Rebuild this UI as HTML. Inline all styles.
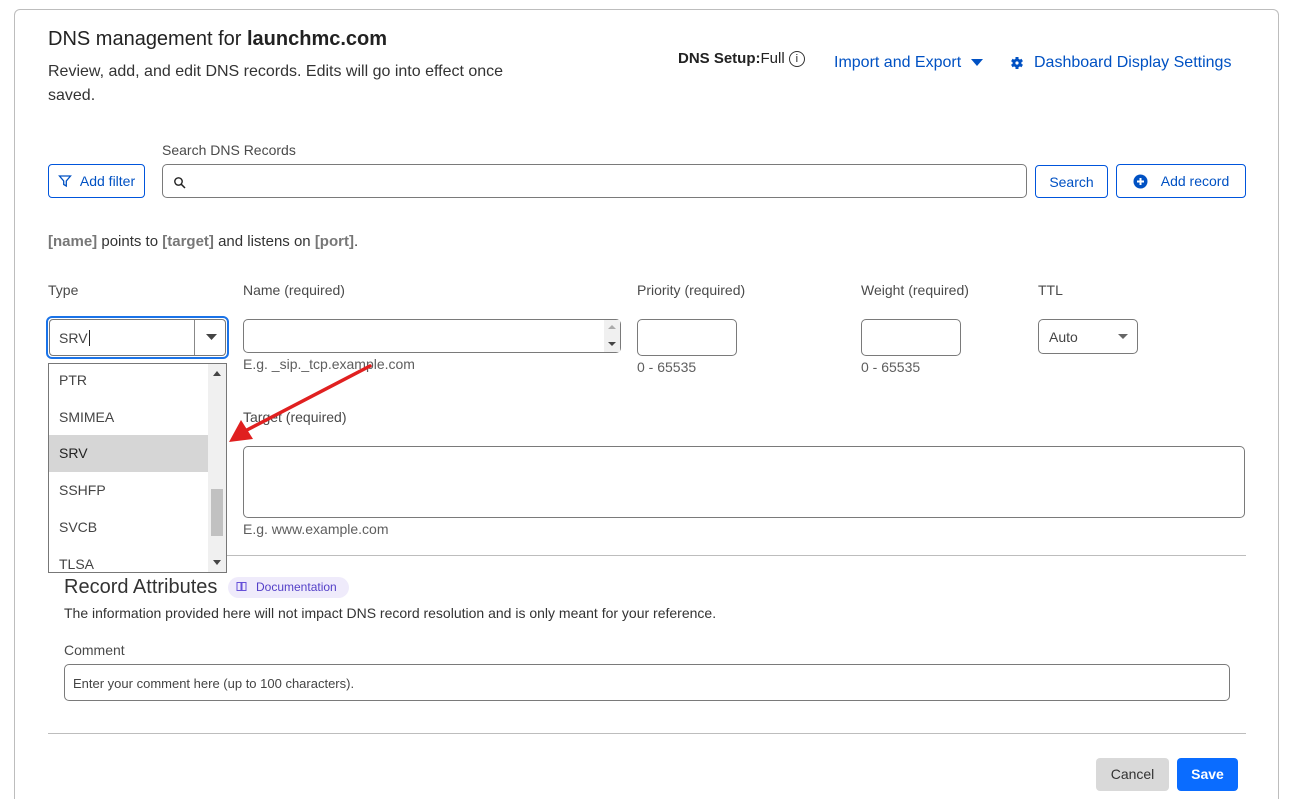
<!DOCTYPE html>
<html><head><meta charset="utf-8"><style>
html,body{margin:0;width:1301px;height:799px;overflow:hidden}
body{background:#fff;font-family:"Liberation Sans",sans-serif;color:#313131;position:relative}
.a{position:absolute;white-space:nowrap}
.card{position:absolute;left:14px;top:9px;width:1263px;height:800px;border:1px solid #bdbdbd;border-bottom:none;border-radius:6px 6px 0 0}
.inp{position:absolute;border:1px solid #7a7a7a;border-radius:5px;background:#fff;box-sizing:border-box}
.btn{position:absolute;border:1px solid #0055dc;border-radius:4px;color:#0051c3;font-size:14px;box-sizing:border-box;display:flex;align-items:center;justify-content:center}
.lbl{font-size:14px;color:#4a4a4a}
.hint{font-size:14px;color:#5e5e5e}
.item{position:absolute;left:49px;width:159px;height:37px;line-height:37px;padding-left:10px;box-sizing:border-box;font-size:14px;color:#444}
</style></head><body>
<div class="card"></div>
<div class="a" style="left:48px;top:28px;font-size:20px;color:#222">DNS management for <b>launchmc.com</b></div>
<div class="a" style="left:48px;top:60px;font-size:16px;line-height:24px;color:#333;white-space:normal;width:480px">Review, add, and edit DNS records. Edits will go into effect once saved.</div>
<div class="a" style="left:678px;top:50px;font-size:15px;color:#222"><b>DNS Setup:</b>Full <span style="display:inline-block;width:14px;height:14px;border:1px solid #333;border-radius:50%;font-size:11px;line-height:14px;text-align:center;vertical-align:1px">i</span></div>
<div class="a" style="left:834px;top:54px;font-size:16px;color:#0051c3">Import and Export <svg width="14" height="10" viewBox="0 0 14 10" style="margin-left:4px"><path d="M1 2h12L7 9z" fill="#0051c3"/></svg></div>
<svg class="a" style="left:1010px;top:56px" width="14" height="14" viewBox="0 0 14 14"><circle cx="7" cy="7" r="4.5" fill="#0051c3"/><g stroke="#0051c3" stroke-width="3"><path d="M7 1v12M1.8 4l10.4 6M1.8 10l10.4-6"/></g><circle cx="7" cy="7" r="1.6" fill="#fff"/></svg>
<div class="a" style="left:1034px;top:54px;font-size:16px;color:#0051c3">Dashboard Display Settings</div>

<div class="a lbl" style="left:162px;top:142px">Search DNS Records</div>
<div class="btn" style="left:48px;top:164px;width:97px;height:34px"><svg width="14" height="14" viewBox="0 0 14 14" style="margin-right:8px"><path d="M1.5 2h11L8.3 7v5L5.7 10.5V7z" fill="none" stroke="#0051c3" stroke-width="1.3"/></svg>Add filter</div>
<div class="inp" style="left:162px;top:164px;width:865px;height:34px"><svg width="14" height="14" viewBox="0 0 14 14" style="position:absolute;left:10px;top:11px"><circle cx="5.5" cy="5.5" r="3.7" fill="none" stroke="#222" stroke-width="1.4"/><path d="M8.3 8.3L12 12" stroke="#222" stroke-width="1.5"/></svg></div>
<div class="btn" style="left:1035px;top:165px;width:73px;height:33px">Search</div>
<div class="btn" style="left:1116px;top:164px;width:130px;height:34px"><svg width="15" height="15" viewBox="0 0 15 15" style="margin-right:13px"><circle cx="7.5" cy="7.5" r="7" fill="#0051c3"/><path d="M7.5 4v7M4 7.5h7" stroke="#fff" stroke-width="2"/></svg>Add record</div>

<div class="a" style="left:48px;top:233px;font-size:15px;color:#333"><b style="color:#777">[name]</b> points to <b style="color:#777">[target]</b> and listens on <b style="color:#777">[port]</b>.</div>

<div class="a lbl" style="left:48px;top:282px">Type</div>
<div class="a lbl" style="left:243px;top:282px">Name (required)</div>
<div class="a lbl" style="left:637px;top:282px">Priority (required)</div>
<div class="a lbl" style="left:861px;top:282px">Weight (required)</div>
<div class="a lbl" style="left:1038px;top:282px">TTL</div>

<div class="a" style="left:46px;top:316px;width:183px;height:43px;border:2px solid #1a73e8;border-radius:6px;box-sizing:border-box"></div>
<div class="inp" style="left:49px;top:319px;width:177px;height:37px;border-color:#777;border-radius:4px">
<div class="a" style="left:9px;top:10px;font-size:14px;color:#444">SRV<span style="border-left:1px solid #222;margin-left:1px"></span></div>
<div class="a" style="left:144px;top:0;width:1px;height:35px;background:#888"></div>
<svg class="a" style="left:156px;top:14px" width="11" height="7" viewBox="0 0 11 7"><path d="M0 0h11L5.5 6z" fill="#444"/></svg></div>

<div class="inp" style="left:243px;top:319px;width:378px;height:34px"><div class="a" style="right:0;top:0;width:16px;height:32px;background:#f0f0f0"></div>
<svg class="a" style="right:4px;top:4px" width="8" height="24" viewBox="0 0 8 24"><path d="M0 5L4 1l4 4z" fill="#aaa"/><path d="M0 18h8l-4 4z" fill="#444"/></svg></div>
<div class="a hint" style="left:243px;top:356px">E.g. _sip._tcp.example.com</div>

<div class="inp" style="left:637px;top:319px;width:100px;height:37px"></div>
<div class="a hint" style="left:637px;top:359px">0 - 65535</div>
<div class="inp" style="left:861px;top:319px;width:100px;height:37px"></div>
<div class="a hint" style="left:861px;top:359px">0 - 65535</div>
<div class="inp" style="left:1038px;top:319px;width:100px;height:35px"><div class="a" style="left:10px;top:9px;font-size:14px;color:#444">Auto</div>
<svg class="a" style="left:79px;top:14px" width="10" height="6" viewBox="0 0 10 6"><path d="M0 0h10L5 5z" fill="#666"/></svg></div>

<div class="a lbl" style="left:243px;top:409px">Target (required)</div>
<div class="inp" style="left:243px;top:446px;width:1002px;height:72px"></div>
<div class="a hint" style="left:243px;top:521px">E.g. www.example.com</div>

<div class="a" style="left:48px;top:555px;width:1198px;height:1px;background:#bdbdbd"></div>

<div class="a" style="left:48px;top:363px;width:179px;height:210px;border:1px solid #777;box-sizing:border-box;background:#fff;overflow:hidden">
</div>
<div class="a" style="left:49px;top:364px;width:177px;height:208px;overflow:hidden">
<div class="item" style="left:0;top:-2px">PTR</div>
<div class="item" style="left:0;top:35px">SMIMEA</div>
<div class="item" style="left:0;top:71px;background:#d6d6d6;color:#222">SRV</div>
<div class="item" style="left:0;top:108px">SSHFP</div>
<div class="item" style="left:0;top:145px">SVCB</div>
<div class="item" style="left:0;top:182px">TLSA</div>
<div class="a" style="left:159px;top:0;width:18px;height:208px;background:#f0f0f0"></div>
<div class="a" style="left:162px;top:125px;width:12px;height:47px;background:#c1c1c1"></div>
<svg class="a" style="left:164px;top:7px" width="8" height="5" viewBox="0 0 8 5"><path d="M0 5L4 0l4 5z" fill="#444"/></svg>
<svg class="a" style="left:164px;top:196px" width="8" height="5" viewBox="0 0 8 5"><path d="M0 0h8L4 5z" fill="#444"/></svg>
</div>

<svg class="a" style="left:220px;top:355px" width="160" height="95" viewBox="220 355 160 95"><path d="M370 366L245 431" stroke="#e02020" stroke-width="3.5" stroke-linecap="round"/><path d="M229 442L241 420L253 439z" fill="#e02020"/></svg>

<div class="a" style="left:64px;top:576px;font-size:20px;color:#333">Record Attributes</div>
<div class="a" style="left:228px;top:577px;width:121px;height:21px;border-radius:11px;background:#efebfb"></div>
<svg class="a" style="left:236px;top:581px" width="11" height="11" viewBox="0 0 11 11"><path d="M1 1.5h4v8H1zM6 1.5h4v8H6z" fill="none" stroke="#6650d8" stroke-width="1"/></svg>
<div class="a" style="left:256px;top:580px;font-size:12px;color:#5440c8">Documentation</div>
<div class="a" style="left:64px;top:605px;font-size:14px;color:#333">The information provided here will not impact DNS record resolution and is only meant for your reference.</div>
<div class="a lbl" style="left:64px;top:642px">Comment</div>
<div class="inp" style="left:64px;top:664px;width:1166px;height:37px"><div class="a" style="left:8px;top:11px;font-size:13px;color:#444">Enter your comment here (up to 100 characters).</div></div>

<div class="a" style="left:48px;top:733px;width:1198px;height:1px;background:#bdbdbd"></div>
<div class="a" style="left:1096px;top:758px;width:73px;height:33px;background:#d9d9d9;border-radius:4px;font-size:14px;color:#333;text-align:center;line-height:33px">Cancel</div>
<div class="a" style="left:1177px;top:758px;width:61px;height:33px;background:#0a6cff;border-radius:4px;font-size:14px;font-weight:bold;color:#fff;text-align:center;line-height:33px">Save</div>
</body></html>
